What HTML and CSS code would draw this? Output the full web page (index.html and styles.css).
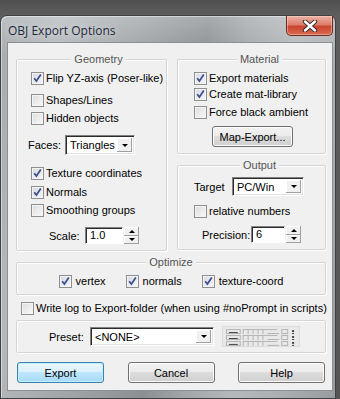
FILE: index.html
```html
<!DOCTYPE html>
<html>
<head>
	<title>OBJ Export Options</title>
	<meta charset="utf-8">
	<link rel="stylesheet" href="styles.css">
</head>
<body>
	<div class="window">
		<div class="titlebar">
			<span class="title">OBJ Export Options</span>
			<div class="close">
				<svg width="16" height="12" viewBox="0 0 16 12">
					<path d="M3 1.5 L13 10.5 M13 1.5 L3 10.5" stroke="#3a2a2a" stroke-width="4.4" stroke-linecap="round"/>
					<path d="M3 1.5 L13 10.5 M13 1.5 L3 10.5" stroke="#fff" stroke-width="2.4" stroke-linecap="round"/>
				</svg>
			</div>
		</div>

		<div class="client">
			<div class="top-row">

				<div class="group geometry">
					<div class="legend">Geometry</div>
					<div class="check r-flip"><span class="box on"></span>Flip YZ-axis (Poser-like)</div>
					<div class="check r-shapes"><span class="box"></span>Shapes/Lines</div>
					<div class="check r-hidden"><span class="box"></span>Hidden objects</div>
					<div class="field r-faces">
						<span class="lbl">Faces:</span>
						<div class="combo faces-combo"><span class="val">Triangles</span><span class="drop"></span></div>
					</div>
					<div class="check r-tex"><span class="box on"></span>Texture coordinates</div>
					<div class="check r-norm"><span class="box on"></span>Normals</div>
					<div class="check r-smooth"><span class="box"></span>Smoothing groups</div>
					<div class="field r-scale">
						<span class="lbl">Scale:</span>
						<div class="spin scale-spin"><span class="val">1.0</span><span class="arrows"><i class="up"></i><i class="down"></i></span></div>
					</div>
				</div>

				<div class="right-col">
					<div class="group material">
						<div class="legend">Material</div>
						<div class="check r-expmat"><span class="box on"></span>Export materials</div>
						<div class="check r-matlib"><span class="box on"></span>Create mat-library</div>
						<div class="check r-black"><span class="box"></span>Force black ambient</div>
						<div class="btn map-btn">Map-Export...</div>
					</div>

					<div class="group output">
						<div class="legend">Output</div>
						<div class="field r-target">
							<span class="lbl">Target</span>
							<div class="combo target-combo"><span class="val">PC/Win</span><span class="drop"></span></div>
						</div>
						<div class="check r-rel"><span class="box"></span>relative numbers</div>
						<div class="field r-prec">
							<span class="lbl">Precision:</span>
							<div class="spin prec-spin"><span class="val">6</span><span class="arrows"><i class="up"></i><i class="down"></i></span></div>
						</div>
					</div>
				</div>
			</div>

			<div class="group optimize">
				<div class="legend">Optimize</div>
				<div class="opt-row">
					<div class="check"><span class="box on"></span>vertex</div>
					<div class="check"><span class="box on"></span>normals</div>
					<div class="check"><span class="box on"></span>texture-coord</div>
				</div>
			</div>

			<div class="check r-log"><span class="box"></span>Write log to Export-folder (when using #noPrompt in scripts)</div>

			<div class="group preset">
				<span class="lbl">Preset:</span>
				<div class="combo preset-combo"><span class="val">&lt;NONE&gt;</span><span class="drop"></span></div>
				<div class="preset-icon">
					<svg width="77" height="20" viewBox="0 0 77 20">
						<g fill="none" stroke="#b4b4b4" stroke-width="1">
							<rect x="3.5" y="2.5" width="14" height="4"/>
							<rect x="3.5" y="8.5" width="14" height="4"/>
							<rect x="3.5" y="14.5" width="14" height="4"/>
							<path d="M20.5 2 V7 M25.5 2 V7 M30.5 2 V7 M35.5 2 V7 M40.5 2 V7 M20.5 8 V13 M25.5 8 V13 M30.5 8 V13 M35.5 8 V13 M40.5 8 V13 M20.5 14 V19 M25.5 14 V19 M30.5 14 V19 M35.5 14 V19 M40.5 14 V19"/>
							<path d="M20 2.5 H55 M20 8.5 H55 M20 14.5 H55"/>
							<path d="M45 6.5 H57 M45 12.5 H57 M45 18.5 H57"/>
							<rect x="59.5" y="2.5" width="6" height="4"/>
							<rect x="59.5" y="8.5" width="6" height="4"/>
							<rect x="59.5" y="14.5" width="6" height="4"/>
						</g>
						<g fill="#444">
							<rect x="6" y="5" width="9" height="1"/>
							<rect x="6" y="11" width="9" height="1"/>
							<rect x="6" y="17" width="9" height="1"/>
							<rect x="70" y="3" width="2" height="2"/>
							<rect x="70" y="6" width="2" height="1"/>
							<rect x="70" y="9" width="2" height="2"/>
							<rect x="70" y="12" width="2" height="1"/>
							<rect x="70" y="15" width="2" height="2"/>
							<rect x="70" y="18" width="2" height="1"/>
						</g>
					</svg>
				</div>
			</div>

			<div class="buttons">
				<div class="btn default">Export</div>
				<div class="btn">Cancel</div>
				<div class="btn">Help</div>
			</div>
		</div>
	</div>
</body>
</html>
```

FILE: styles.css
```css
*,*::after,*::before{
	box-sizing: border-box;
	margin: 0;
	padding: 0;
}

body{
	width: 340px;
	height: 399px;
	overflow: hidden;
	background: linear-gradient(#4f4f4f, #5e5e5e 15px, #555 100%);
	font-family: Tahoma, "Liberation Sans", Arial, sans-serif;
	font-size: 11px;
	color: #000;
}

.window{
	margin-top: 15px;
	width: 336px;
	height: 384px;
	border: 1px solid #3e4245;
	border-radius: 7px 7px 0 0;
	padding: 0 2px 0 6px;
	background:
		linear-gradient(rgba(255,255,255,0.25), rgba(255,255,255,0) 40px),
		linear-gradient(100deg, #a7abae 0%, #b4b8bb 15%, #9fa3a6 35%, #8b8f92 52%, #a2a6a9 62%, #b6b9bb 75%, #a9adb0 88%, #989c9f 100%);
	box-shadow: inset 1px 1px 0 rgba(255,255,255,0.45);
}

.titlebar{
	height: 26px;
	display: flex;
	align-items: flex-start;
}

.title{
	font-family: "Open Sans", "Noto Sans", sans-serif;
	font-size: 12px;
	color: #1c2a3c;
	margin: 6px 0 0 1px;
	text-shadow: 0 0 6px rgba(255,255,255,0.7);
}

.close{
	margin-left: auto;
	width: 47px;
	height: 20px;
	border: 1px solid #6b2a22;
	border-top: none;
	border-radius: 0 0 5px 5px;
	background: linear-gradient(#eeb2a4, #dc7f6c 45%, #c9452f 55%, #d96a50);
	display: flex;
	justify-content: center;
	align-items: center;
	box-shadow: inset 0 0 0 1px rgba(255,225,215,0.45);
}

.client{
	width: 326px;
	height: 349px;
	background: #f0f0f0;
	border: 1px solid #8c9095;
	padding: 16px 6px 0 8px;
}

.top-row{
	display: flex;
	gap: 10px;
}

.group{
	border: 1px solid #d5d5d5;
	box-shadow: inset 1px 1px 0 #fff, 1px 1px 0 #fff;
	border-radius: 2px;
}

.legend{
	display: table;
	margin: -7px auto 0;
	padding: 0 3px;
	background: #f0f0f0;
	line-height: 13px;
	color: #555;
}

.geometry{
	width: 151px;
	height: 192px;
	padding-left: 14px;
}

.right-col{
	width: 149px;
}

.material{
	height: 95px;
	padding-left: 16px;
}

.output{
	margin-top: 11px;
	height: 85px;
	padding-left: 16px;
}

/* checkboxes */
.check{
	display: flex;
	align-items: center;
	height: 13px;
	line-height: 13px;
	white-space: nowrap;
}

.box{
	width: 13px;
	height: 13px;
	margin-right: 2px;
	border: 1px solid #8e8f8f;
	background: linear-gradient(135deg, #dcdcdc, #f9f9f9);
	box-shadow: inset 0 0 0 1px #f4f4f4;
	flex: none;
}

.box.on{
	background:
		url("data:image/svg+xml,%3Csvg xmlns='http://www.w3.org/2000/svg' width='11' height='11'%3E%3Cpath d='M2.2 5.3 L4.4 8 L8.8 1.6' fill='none' stroke='%233a4f8c' stroke-width='1.7'/%3E%3C/svg%3E") center no-repeat,
		linear-gradient(135deg, #d6d9e0, #f6f7fa);
}

.r-flip{ margin-top: 6px; }
.r-shapes{ margin-top: 9px; }
.r-hidden{ margin-top: 5px; }
.r-tex{ margin-top: 12px; }
.r-norm{ margin-top: 6px; }
.r-smooth{ margin-top: 5px; }

.r-expmat{ margin-top: 6px; }
.r-matlib{ margin-top: 3px; }
.r-black{ margin-top: 5px; }

.r-rel{ margin-top: 9px; }

/* label + control rows */
.field{
	display: flex;
	align-items: center;
}

.r-faces{ margin-top: 10px; margin-left: -3px; }
.r-faces .lbl{ width: 37px; }
.r-scale{ margin-top: 10px; margin-left: 18px; }
.r-scale .lbl{ width: 36px; }

.r-target{ margin-top: 5px; }
.r-target .lbl{ width: 38px; }
.r-prec{ margin-top: 8px; margin-left: 8px; }
.r-prec .lbl{ width: 49px; }

.combo{
	display: flex;
	align-items: stretch;
	background: #fff;
	border: 1px solid;
	border-color: #828282 #fff #fff #828282;
	box-shadow: inset 1px 1px 0 #2c2c2c, inset -1px -1px 0 #e2e2e2;
	padding: 2px;
}

.combo .val{
	flex: 1;
	padding-left: 2px;
	line-height: 14px;
}

.drop{
	width: 15px;
	background: #f0f0f0;
	box-shadow: inset -1px -1px 0 #a0a0a0, inset 1px 1px 0 #fff;
	display: flex;
	justify-content: center;
	align-items: center;
}

.drop::after{
	content: "";
	border-left: 3px solid transparent;
	border-right: 3px solid transparent;
	border-top: 3px solid #000;
}

.faces-combo{ width: 70px; height: 20px; }
.target-combo{ width: 72px; height: 19px; }
.preset-combo{ width: 124px; height: 19px; }

.spin{
	display: flex;
	height: 17px;
}

.spin .val{
	background: #fff;
	border: 1px solid;
	border-color: #828282 #fff #fff #828282;
	box-shadow: inset 1px 1px 0 #2c2c2c;
	padding: 1px 0 0 4px;
	line-height: 13px;
}

.scale-spin .val{ width: 38px; }
.prec-spin .val{ width: 34px; }

.arrows{
	width: 15px;
	display: flex;
	flex-direction: column;
	margin-left: 1px;
}

.arrows i{
	flex: 1;
	background: #f0f0f0;
	box-shadow: inset -1px -1px 0 #a0a0a0, inset 1px 1px 0 #fff;
	display: flex;
	justify-content: center;
	align-items: center;
}

.arrows .up::after{
	content: "";
	border-left: 3px solid transparent;
	border-right: 3px solid transparent;
	border-bottom: 3px solid #000;
}

.arrows .down::after{
	content: "";
	border-left: 3px solid transparent;
	border-right: 3px solid transparent;
	border-top: 3px solid #000;
}

/* buttons */
.btn{
	height: 21px;
	border: 1px solid #707070;
	border-radius: 3px;
	background: linear-gradient(#f2f2f2, #ebebeb 49%, #dddddd 50%, #cfcfcf);
	box-shadow: inset 0 0 0 1px #fcfcfc;
	display: flex;
	justify-content: center;
	align-items: center;
}

.map-btn{
	width: 81px;
	margin: 7px 0 0 18px;
}

.btn.default{
	border-color: #3c7fb1;
	background: linear-gradient(#eaf6fd, #d9f0fc 49%, #bee6fd 50%, #a7d9f5);
	box-shadow: inset 0 0 0 1px #c1f0ff;
}

.optimize{
	margin-top: 11px;
	height: 33px;
}

.opt-row{
	display: flex;
	justify-content: center;
	gap: 20px;
	margin-top: 6px;
}

.opt-row .check .box{
	margin-right: 4px;
}

.r-log{
	margin: 7px 0 0 5px;
}

.preset{
	margin-top: 5px;
	height: 33px;
	display: flex;
	align-items: center;
	padding-left: 32px;
}

.preset .lbl{
	width: 41px;
}

.preset-icon{
	margin-left: 8px;
	width: 78px;
	height: 21px;
	background: #e9e9e9;
	border: 1px solid #dcdcdc;
	display: flex;
}

.buttons{
	display: flex;
	justify-content: space-between;
	margin: 9px 1px 0 1px;
}

.buttons .btn{
	width: 87px;
}
```
